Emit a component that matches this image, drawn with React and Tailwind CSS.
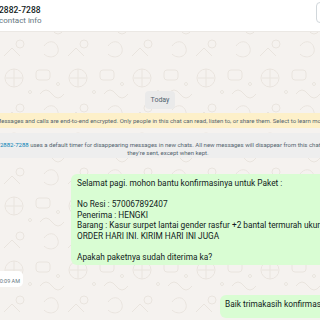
export default function App() {
  const font = { fontFamily: 'Roboto, "Noto Sans", Arial, sans-serif' };
  return (
    <div className="relative w-[320px] h-[320px] overflow-hidden flex flex-col bg-[#f5f2ef] text-[#111b21]" style={font}>
      <svg className="absolute inset-0 w-[320px] h-[320px]" viewBox="0 0 320 320" aria-hidden="true">
        <defs>
          <pattern id="doodle" width="64" height="64" patternUnits="userSpaceOnUse">
            <g fill="none" stroke="#e9e4de" strokeWidth="1">
              <circle cx="14" cy="14" r="9" />
              <path d="M6 14 h16 M14 5 v18" />
              <rect x="36" y="6" width="14" height="10" rx="3" />
              <path d="M40 30 q6 -8 12 0 t12 0" />
              <circle cx="20" cy="44" r="4" />
              <path d="M4 56 l8 -8 l8 8" />
              <path d="M44 46 c4 -6 12 -6 14 2 c2 8 -8 12 -14 6" />
              <circle cx="30" cy="28" r="1.5" />
              <circle cx="58" cy="20" r="1.5" />
            </g>
          </pattern>
        </defs>
        <rect width="320" height="320" fill="url(#doodle)" />
      </svg>
      <header className="relative h-[32px] shrink-0 bg-white border-b border-[#ebe8e4] flex items-center justify-between">
        <div className="flex flex-col ml-[-1px]">
          <span className="text-[8.5px] leading-[11px] font-medium whitespace-nowrap">2882-7288</span>
          <span className="text-[8px] leading-[10px] text-[#667781] whitespace-nowrap">contact info</span>
        </div>
        <div className="w-[12px] h-[21px] mr-[-8px] mb-[6px] border border-[#d1d7db] rounded-[4px] bg-white" />
      </header>
      <main className="relative flex flex-col flex-1 min-h-0">
        <div className="self-center mt-[59px] h-[18px] px-[6px] flex items-center rounded-[4px] bg-[#eaeaea] text-[7px] text-[#54656f]">
          Today
        </div>
        <div className="mt-[4px] h-[15px] bg-[#fdf0c9] flex items-center overflow-hidden">
          <span className="ml-[-4px] whitespace-nowrap text-[6px] text-[#54656f]">
            Messages and calls are end-to-end encrypted. Only people in this chat can read, listen to, or share them. Select to learn more.
          </span>
        </div>
        <div className="mt-[5px] bg-[#eeeeee] pt-[8px] pb-[1px] text-[6px] leading-[8px] text-[#54656f] overflow-hidden">
          <div className="whitespace-nowrap">
            <span className="text-[#027eb5]">2882-7288</span> uses a default timer for disappearing messages in new chats. All new messages will disappear from this chat 24 hours after
          </div>
          <div className="pl-[16px] text-center whitespace-nowrap">they're sent, except when kept.</div>
        </div>
        <div className="mt-[16px] ml-[71px] mr-[-100px] bg-[#d9fdd3] rounded-[6px] pl-[6px] pt-[4px] pb-[3px] text-[8.3px] leading-[10.5px] whitespace-nowrap">
          <div>Selamat pagi. mohon bantu konfirmasinya untuk Paket :</div>
          <div>&nbsp;</div>
          <div>No Resi : 570067892407</div>
          <div>Penerima : HENGKI</div>
          <div>Barang : Kasur surpet lantai gender rasfur +2 bantal termurah ukuran big</div>
          <div>ORDER HARI INI. KIRIM HARI INI JUGA</div>
          <div>&nbsp;</div>
          <div>Apakah paketnya sudah diterima ka?</div>
        </div>
        <div className="mt-[6px] w-[23px] h-[16px] bg-white rounded-r-[5px] flex items-end justify-end overflow-hidden pr-[3px] pb-[2px]">
          <span className="whitespace-nowrap text-[5.5px] leading-[7px] text-[#667781]">10:09 AM</span>
        </div>
        <div className="mt-[8px] ml-[220px] mr-[-60px] bg-[#d9fdd3] rounded-[6px] pl-[5px] pt-[4px] pb-[8px] text-[8.3px] leading-[10.5px] whitespace-nowrap">
          Baik trimakasih konfirmasinya
        </div>
      </main>
    </div>
  );
}
